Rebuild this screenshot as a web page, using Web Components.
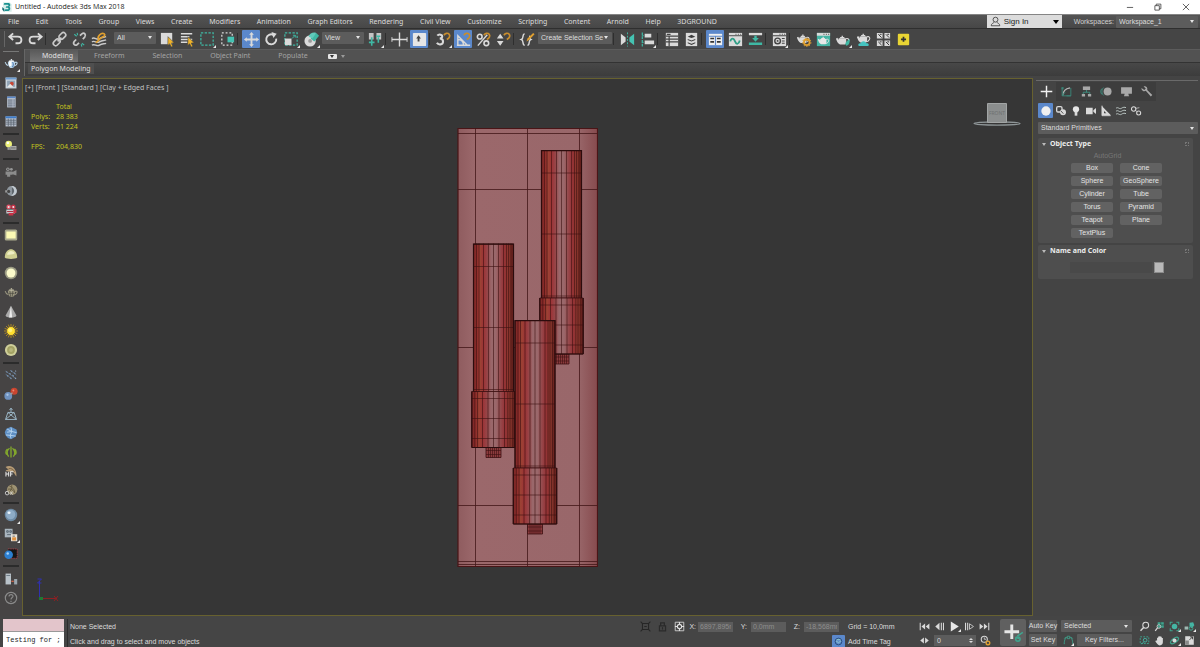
<!DOCTYPE html>
<html lang="en">
<head>
<meta charset="utf-8">
<title>Untitled - Autodesk 3ds Max 2018</title>
<style>
  html, body { margin: 0; height: 100%; background: #444; overflow: hidden; }
  body { font: 7px/10px "Noto Sans", "Open Sans", sans-serif; color: #dcdcdc; --narrow: "Liberation Sans", Arial, sans-serif; }
</style>
</head>
<body>
<mx-app></mx-app>
<script>
/* Icon drawings, all on an 18 x 18 grid. */
const W = '#dadada', T = '#3fb8a4', Y = '#e0a030';
const pot = (x, y, s, c) => `<g transform="translate(${x} ${y}) scale(${s})" fill="${c}"><path d="M3 5h8c1 3 .5 6-1 7H4.500C2 11 1 8 0 5.500l1.500-1 1.700 2.500z"/><path d="M5 3.500h4l1 1.500H4zM6.300 2h1.500v1.500H6.300z"/><path d="M11 5.500c3-1 4 1 3 3s-3 2.500-4 2.500" fill="none" stroke="${c}" stroke-width="1.200"/></g>`;
const magnet = '<path d="M9.500 4.500c1-2 4-3 5.500-1s0 4-2.500 5.500" fill="none" stroke="#c88d2e" stroke-width="1.800"/>';
const kettle = (c1, c2) => `<path d="M5 6h9c1 4-1 7-2.500 8H8C6 13 5 10 5 6z" fill="${c1}"/><path d="M5 11C3 10 2 8 1.500 6.500M14 7c2-1 3.500 0 2.500 2s-2 2-3.500 2.500" fill="none" stroke="${c1}" stroke-width="1.400"/><ellipse cx="9.500" cy="5.500" rx="3.800" ry="1.200" fill="${c2}"/><circle cx="9.500" cy="3.500" r="1" fill="${c2}"/>`;
const ICONS = {
  logo: '<path d="M3 2h10l3 3v11H3z" fill="#d7eeea"/><path d="M5 3h6c3 0 4 4 1.500 5.500C15 10 14 15 10 15H5l1.500-2.500H10c1.500 0 1.500-2.500 0-2.500H7l1-2h2c1.500 0 1.500-2.500 0-2.500H4z" fill="#1a9190"/><path d="M2 9l3 3v4l-3-3z" fill="#116a70"/>',
  undo: '<path d="M6.500 2.500L2.500 6l4 3.500M3 6h8.500c5 0 5 7 0 7H9" fill="none" stroke="#dadada" stroke-width="2"/>',
  redo: '<path d="M11.500 2.500l4 3.500-4 3.500M15 6H6.500c-5 0-5 7 0 7H9" fill="none" stroke="#dadada" stroke-width="2"/>',
  link: '<g fill="none" stroke="#c9c9c9" stroke-width="1.800"><rect x="8" y="2.700" width="8" height="5" rx="2.500" transform="rotate(-45 12 5.200)"/><rect x="2" y="9.500" width="8" height="5" rx="2.500" transform="rotate(-45 6 12)"/><path d="M7 11l4-4"/></g>',
  unlink: '<g fill="none" stroke="#c9c9c9" stroke-width="1.800"><path d="M9.500 5l2-2c2.500-2 5 1 3 3.500l-2 2M5.500 9l-2 2c-2 2.500.5 5 3 3.500l2-2"/><path d="M3.500 3.500l2.500 2M11.500 13l2.500 2M6.500 2l.5 2.500M10.800 14l.7 2.500" stroke="#3fb8a4" stroke-width="1.200"/></g>',
  bind: '<g fill="none" stroke="#c9c9c9" stroke-width="1.500"><path d="M1 8c3-2 5 2 8 0s5-1 7-2M1 11.500c3-2 5 2 8 0s5-1 7-2M1 15c3-2 5 2 8 0s5-1 7-2"/><path d="M8 9c-2-3 3-8 6-6 2 2-1 3-3 4s-4 5-6 5" stroke="#e0a030" stroke-width="1.700"/></g>',
  pick: '<path d="M2 2h12v12H2z" fill="#dadada"/><path d="M9.500 6l6.500 6.500-3 .3 1.600 3.400-1.700.8-1.600-3.500-2 1.800z" fill="#f0b42a" stroke="#444" stroke-width=".6"/>',
  pickname: '<path d="M2 3h12M2 6h9M2 9h12M2 12h7" stroke="#dadada" stroke-width="1.600"/><path d="M9.500 6l6.500 6.500-3 .3 1.600 3.400-1.700.8-1.600-3.500-2 1.800z" fill="#f0b42a" stroke="#444" stroke-width=".6"/>',
  rect: '<rect x="2" y="2" width="13" height="13" fill="none" stroke="#3fb8a4" stroke-width="1.300" stroke-dasharray="2.500 1.500"/>',
  cross: '<rect x="3" y="2" width="11" height="13" fill="none" stroke="#dadada" stroke-width="1.300" stroke-dasharray="2 2"/><rect x="9" y="6" width="7" height="6" fill="#45c3b2"/>',
  move: '<path d="M9 1l2.500 3H10v4h4V6.500L17 9l-3 2.500V10h-4v4h1.500L9 17l-2.500-3H8v-4H4v1.500L1 9l3-2.500V8h4V4H6.500z" fill="#dadada"/>',
  rotate: '<path d="M14 8a5.300 5.300 0 1 1-3-4" fill="none" stroke="#dadada" stroke-width="2"/><path d="M9 1l5.500 2L11 7.500z" fill="#dadada"/>',
  scale: '<rect x="2" y="2" width="13" height="13" fill="none" stroke="#3fb8a4" stroke-width="1.300" stroke-dasharray="2.500 1.500"/><path d="M2 8h7v7H2z" fill="#dadada"/><path d="M9.500 8L13 4.500M10.500 4.500H13V7" stroke="#3fb8a4" fill="none"/>',
  place: '<circle cx="7.500" cy="10.500" r="6" fill="#dadada"/><path d="M8 8l6-6 3 3-5 6z" fill="#3fb8a4"/><path d="M6 6c1-4 5-5 8-4l-4 6z" fill="#5fcbbb"/><circle cx="7.500" cy="10.500" r="2" fill="#9a9a9a"/>',
  pivot: '<path d="M2 2h5v7H2zM10 2h5v7h-5z" fill="#c4c4c4"/><path d="M5 6.500v9M2 12h6M12 6.500v6M9.500 5.500H14" stroke="#3fb8a4" stroke-width="1.700"/>',
  manip: '<path d="M9 1.500v15M1 9h16" stroke="#dadada" stroke-width="1.500"/><path d="M1 6.500v5M17 6.500v5" stroke="#dadada"/>',
  keyb: '<rect x="2" y="2" width="14" height="14" rx="1" fill="#e6e6e6"/><path d="M8 4.500L10.500 8H9v3H7V8H5.500z" fill="#444"/>',
  snap: '<path d="M2.500 5c1.500-2 6-1.500 5 1.500C7 8 5 8 5 8s3.500 0 3.500 3c0 4-5 4-6.500 1.500" fill="none" stroke="#dadada" stroke-width="2.200"/>' + magnet,
  angle: '<path d="M2 15h14M3 15V5l10 10M3 9c4 0 6 3 6 6" fill="none" stroke="#dadada" stroke-width="1.500"/>' + magnet,
  percent: '<circle cx="5" cy="6" r="2.500" fill="none" stroke="#dadada" stroke-width="1.700"/><circle cx="12" cy="13" r="2.500" fill="none" stroke="#dadada" stroke-width="1.700"/><path d="M3 15.500L13 4" stroke="#dadada" stroke-width="1.500"/>' + magnet,
  spin: '<path d="M5.500 3l3.500 5H2zM5.500 15.500L9 10.500H2z" fill="#dadada"/>' + magnet,
  sets: '<path d="M6 3C3 3 5.500 8 2.500 9 5.500 10 3 15 6 15M9 15c3 0 .5-5 3.500-6C10.500 8 12 6 11 5" fill="none" stroke="#dadada" stroke-width="1.500"/><path d="M8 11l1-3 6-6 1.500 1.500-6 6z" fill="#e0a030"/>',
  mirror: '<path d="M2 3l5 4v4l-5 4z" fill="#dadada"/><path d="M16 3l-5 4v4l5 4z" fill="#45c3b2"/><path d="M9 1.500v15" stroke="#3fb8a4" stroke-dasharray="2 1.500"/>',
  align: '<path d="M3.500 1.500v15" stroke="#3fb8a4" stroke-width="1.300" stroke-dasharray="3 1"/><path d="M6 3h7v4H6zM6 10h10v4H6z" fill="#dadada"/><path d="M3 5h2M3 12h2" stroke="#3fb8a4"/>',
  layers: '<path d="M3 2h13v14H3z" fill="#dadada"/><path d="M3 5.500h13M3 8.500h13M3 11.500h13M6.500 5v11M4 3.500h4" stroke="#444" stroke-width="1.300"/>',
  stack: '<path d="M3 2h12v14H3z" fill="#dadada"/><path d="M9 4l4 2-4 1.500L5 6zM5 8.500l4 1.500 4-1.500v1l-4 1.700-4-1.700zM5 12l4 1.500 4-1.500v1l-4 1.700L5 13z" fill="#3c3c3c"/>',
  explorer: '<path d="M2 3h14v12H2z" fill="#f0f0f0"/><path d="M2 5.500h14M9 5.500V15" stroke="#5c86c5" stroke-width="1.200"/><path d="M3.500 8h4M3.500 11.500h4M10.500 8h4M10.500 11.500h4" stroke="#333" stroke-width="1.700"/>',
  curve: '<path d="M2 2h14v14H2z" fill="#dadada"/><path d="M2 5h14M9 3.500h1M11.500 3.500h1M14 3.500h1" stroke="#444"/><path d="M3.500 11c1-4 3.500-4 5 0s4 3 5-1" fill="none" stroke="#2f9e86" stroke-width="1.900"/>',
  schem: '<path d="M2 2h14v2.500H2z" fill="#dadada"/><path d="M9 5v4M2 13.500h14" stroke="#3fb8a4" stroke-width="2.500"/><path d="M5.500 7.500h7L9 11.500z" fill="#3fb8a4"/>',
  mated: '<path d="M2 2h14v14H2z" fill="#dadada"/><path d="M2 5h14M11.500 8h3M11.500 10.500h3M11.500 13h3M9 3.500h1M11.500 3.500h1M14 3.500h1" stroke="#444" stroke-width="1.100"/><circle cx="7" cy="10.500" r="3" fill="none" stroke="#444" stroke-width="1.500"/><circle cx="7" cy="10.500" r="1" fill="#444"/>',
  rsetup: pot(2, 2, 0.9, W) + '<circle cx="12.500" cy="12" r="3" fill="none" stroke="#e0a030" stroke-width="1.900"/><circle cx="12.500" cy="12" r="4.400" fill="none" stroke="#e0a030" stroke-dasharray="1.500 1.500"/>',
  rframe: '<path d="M2 2h14v14H2z" fill="#45b5a4"/><path d="M2 2h14v3H2z" fill="#dadada"/><path d="M9 3.500h1M11.500 3.500h1M14 3.500h1" stroke="#333"/>' + pot(3, 4.500, 0.8, '#e8e8e8'),
  render: pot(1, 3, 0.95, W) + '<path d="M11 14c0-3 3-4 4.500-5.500.5 4-1 7-3.500 7z" fill="#3fb8a4"/>',
  cloud: pot(2, 1, 0.95, W) + '<path d="M4 16c-1.500-2 .5-3.500 2-3 1-3 5-3 6 0 3-.5 3.500 3 1 3z" fill="#45c3c0"/>',
  quads: '<path d="M2 2h6v6H2zM10 2h6v6h-6zM2 10h6v6H2zM10 10h6v6h-6z" fill="#dadada"/><path d="M3.500 3.500L7 7M11.500 3.500L15 7M3.500 11.500L7 15M11.500 11.500L15 15M5 3.500h2M13 3.500h2M5 11.500h2M13 11.500h2" stroke="#333"/>',
  plugin: '<rect x="3" y="3" width="12" height="12" rx="1" fill="#e9d534"/><path d="M9 6v5.500M6.300 8.800h5.400" stroke="#333" stroke-width="1.800"/>',

  user: '<circle cx="9" cy="6" r="4" fill="none" stroke="#333" stroke-width="1.300"/><path d="M2 16c0-4 4-4.500 5-6M16 16c0-4-4-4.500-5-6M2 16h14" fill="none" stroke="#333" stroke-width="1.300"/>',
  min: '<path d="M2 10h14" stroke="#333" stroke-width="1.700"/>',
  max: '<path d="M2 6h10v10H2zM5 6V2.500h10.500V13H12" fill="none" stroke="#333" stroke-width="1.700"/>',
  close: '<path d="M2 2l14 14M16 2L2 16" stroke="#333" stroke-width="1.700"/>',

  steapot: kettle('#bcd6ea', '#f0f6fb') + '<ellipse cx="8" cy="9" rx="1.800" ry="3" fill="#fff"/><path d="M10.500 7c2 0 2 5 0 6" fill="none" stroke="#5c86b8" stroke-width="1.500"/>',
  sframe: '<path d="M2 2h14v14H2z" fill="#c9d4dd"/><path d="M2 2h14v2.500H2z" fill="#6c9bd0"/><path d="M4 6h10v8H4z" fill="#8fa2b4"/><circle cx="10" cy="10" r="2.500" fill="#c84635"/><path d="M4 14l4-4 4 4z" fill="#e6e6e6"/>',
  ssheet: '<path d="M4 2h11v14H4z" fill="#b9c2cf"/><path d="M4 2h11v2H4z" fill="#5b87c6"/><path d="M5 6.500h9M5 9h9M5 11.500h9M5 14h9" stroke="#4f5968" stroke-width="1.100"/><path d="M11.500 5v11" stroke="#b9c2cf"/>',
  stable: '<path d="M2 3h14v13H2z" fill="#b9c2cf"/><path d="M2 3h14v2.500H2z" fill="#3f7cc9"/><path d="M2 8h14M2 10.500h14M2 13h14M5.500 6v10M9 6v10M12.500 6v10" stroke="#59626e"/>',
  sbulb: '<circle cx="6" cy="6.500" r="4.300" fill="#edf07a"/><circle cx="5" cy="5" r="1.500" fill="#fff"/><path d="M4.500 10.500h3V14h-3z" fill="#9a9a9a"/><path d="M8 9h8v5H8z" fill="#aaa"/><path d="M9 11.500h6" stroke="#555"/>',
  scam: '<circle cx="5" cy="5.500" r="2.300" fill="#969696"/><circle cx="9.500" cy="5.500" r="1.800" fill="#969696"/><path d="M2 8.500h9v4H2zM11 9l5-2.500v7L11 12zM4 12.500h4V15H4z" fill="#8c8c8c"/><circle cx="5" cy="5.500" r="1" fill="#444"/>',
  smoon: '<circle cx="10" cy="9" r="6.500" fill="#8f979f"/><path d="M10 2.500a6.500 6.500 0 0 1 0 13z" fill="#c2c9d0"/><path d="M10 4c4 2 4 8 0 10z" fill="#5f666d"/><path d="M1.500 8h4v3h-4z" fill="#9a9a9a"/><circle cx="6" cy="9.500" r="2" fill="#444"/>',
  sredcam: '<circle cx="6" cy="5" r="3" fill="#e05366"/><circle cx="12" cy="5" r="3" fill="#c73247"/><circle cx="6" cy="5" r="1.300" fill="#e8eef0"/><circle cx="12" cy="5" r="1.300" fill="#e8eef0"/><path d="M3 8.500h11v5H3z" fill="#c9ced2"/><path d="M12 9l4-1.500v5L12 14zM6 13h6v3H6z" fill="#c73247"/><path d="M4 11h8" stroke="#a42738" stroke-width="1.300"/>',
  srect: '<rect x="1" y="2" width="16" height="14" rx="2" fill="#a9a98c"/><rect x="3" y="4.500" width="12" height="9" fill="#fcfab4"/>',
  sdome: '<path d="M1 13.500C1 7 5 3 9 3s8 4 8 10.500c-2 2.500-14 2.500-16 0z" fill="#cfcf92"/><path d="M4 10c0-3 3-5 5-5s4 1 5 3c-3 2-7 2-10 2z" fill="#eeeec4"/>',
  sdisc: '<circle cx="9" cy="9" r="8" fill="#9c9c84"/><circle cx="9" cy="9" r="5.700" fill="#fbfacb"/>',
  swire: kettle('#99957f', '#b8b49c') + '<path d="M7.500 6l1 8M11.500 6l-1 8M5.500 9.500h8" stroke="#4c4a40" stroke-width=".9"/>',
  scone: '<path d="M9 1l7 12.500c0 3.500-14 3.500-14 0z" fill="#a9a9a9"/><path d="M9 1l1.500 15h-4z" fill="#ececec"/>',
  ssun: '<path d="M9 0v18M0 9h18M2.600 2.600l12.800 12.800M15.400 2.600L2.600 15.400M5.600 .8l6.800 16.400M12.400 .8L5.600 17.200M.8 5.600l16.400 6.800M.8 12.400l16.400-6.800" stroke="#c99a1c" stroke-width="1"/><circle cx="9" cy="9" r="5" fill="#ffdf30"/><circle cx="8" cy="8" r="2.500" fill="#fff07a"/>',
  sring: '<circle cx="9" cy="9" r="7.800" fill="#cfcf9a"/><circle cx="9" cy="9" r="5" fill="#a3a264"/><circle cx="9" cy="9" r="2.500" fill="#b7b67c"/>',
  sdots: '<g fill="#93b0cf"><path d="M2 4l3 1-1 1.500zM6 6l3 1.500L8 9zM10 8.500l3 1.500-1 1.500zM13 12l3 1-1 1.500zM8 3l3 1-1 1.500zM12 5.500l3 1-1 1.500zM3 8.500L6 10l-1 1.500zM7 12l3 1-1 1.500zM14 3l2 .7-1 1.300z"/></g><path d="M2 4l12 9M8 3l8 6M2 8l8 6" stroke="#617c9d" stroke-width=".8"/>',
  smol: '<circle cx="5.500" cy="11.500" r="5" fill="#6f92c0"/><circle cx="13" cy="5.500" r="4.500" fill="#c9452f"/><circle cx="4.500" cy="10" r="1.500" fill="#a8c4e4"/><circle cx="12" cy="4.500" r="1.200" fill="#ea8a74"/><path d="M8 9.500l3-2" stroke="#999" stroke-width="1.600"/>',
  scage: '<path d="M2 16l3-9h8l3 9zM2 16l11-9M16 16L5 7M9 1.500V7M7 4l2-2.500L11 4" fill="none" stroke="#9db9c9" stroke-width="1.200"/>',
  scrys: '<path d="M9 1l3 1.500 4 2 1 4-2 5-3 2-3 1.500-4-1.500-3-3.500L1 8l2-4.500z" fill="#5e8fc4"/><path d="M9 2l1 5-6-3M10 7l6 1.500M10 7l-2 5-5.500-.5M8 12l1 4M8 12l7 1M4 8l6-1" stroke="#bcd8f2" stroke-width="1.100" fill="none"/>',
  sgrass: '<path d="M9 16V2M6 15C3 11 4 7 7 4M12 15c3-3.500 2-7.500-1-11M3.500 12.500c-2-3-1-5.500 1-7.500M14.500 12.500c2-3 1-5.500-1-7.500" fill="none" stroke="#83a82c" stroke-width="1.700"/>',
  sbird: '<path d="M2 4c4-3 10-1 12 3 2 3 2 6 2 9-2-2-3-5-5-6-4 0-7 0-9-2l4-1c-2-1-3-2-4-3z" fill="#b59a74"/><path d="M6 6c3-1 6 1 8 4" stroke="#6e583c" fill="none"/><path d="M2.500 10v6M6 10v6M2.500 13H6M8.500 16v-6H12M8.500 13H11" stroke="#e8e8e8" stroke-width="1.300" fill="none"/>',
  sorn: '<circle cx="10.500" cy="8.500" r="6.700" fill="#9e9272"/><path d="M7 4c4 1 6 4 7 8M5 8c4-1 7 1 9 5M10 2.500c0 4-1 8-4 10" stroke="#62583e" fill="none" stroke-width="1.100"/><circle cx="4" cy="13" r="2.300" fill="none" stroke="#d8d8d8" stroke-width="1.100"/><path d="M8 11l3 4M11 11l-3 4" stroke="#d8d8d8"/>',
  sball: '<circle cx="9" cy="9" r="8" fill="#6e8ba5"/><circle cx="8.500" cy="8.500" r="6" fill="#8dabc6"/><ellipse cx="6.500" cy="6" rx="2" ry="1.600" fill="#eaf4fc"/>',
  sdocs: '<path d="M1 1h10v11H1z" fill="#a9b5be"/><path d="M3.500 3.500h2v2h-2zM7.500 3.500h2v2h-2zM4 8.500h5" stroke="#4b5863" fill="none"/><path d="M9 8h8v9H9z" fill="#e4ded4"/><path d="M10.500 12h5v4h-5z" fill="#e0913e"/><path d="M11 10.500h3" stroke="#555"/>',
  sblue: '<path d="M5 2.500h12v12H7" fill="#161616" stroke="#b24049" stroke-dasharray="2 1"/><circle cx="6" cy="10" r="5.500" fill="#2c7fd0"/><circle cx="4.800" cy="8.300" r="1.600" fill="#a5d2f8"/>',
  sbars: '<path d="M2 2h7v14H2z" fill="#b9c2c9"/><path d="M3 4.500h5" stroke="#5d6b77"/><path d="M13 9h4v7h-4z" fill="#9ba6ae"/><path d="M9.500 12h3" stroke="#c9634a" stroke-width="1.700"/>',
  shelp: '<circle cx="9" cy="9" r="7.300" fill="none" stroke="#8b8b8b" stroke-width="1.500"/><path d="M6.500 7c0-3.500 5.500-3 5 0-.3 1.500-2.500 1.500-2.500 4M9 12.500V14" fill="none" stroke="#8b8b8b" stroke-width="1.500"/>',

  plus: '<path d="M9 1v16M1 9h16" stroke="#f2f2f2" stroke-width="2"/>',
  modify: '<path d="M4 14.500C4 9 8 5 14 4" fill="none" stroke="#b5b5b5" stroke-width="1.700"/><path d="M3 4v11h12M3 15L7 10M9 15h6V4" fill="none" stroke="#3b8577" stroke-width="1.300"/><path d="M2 3h3v3H2z" fill="#3b8577"/>',
  hier: '<path d="M4 2h10v5H4z" fill="#a8a8a8"/><path d="M9 7v3M4.500 13v-3h9v3" fill="none" stroke="#3f8f80" stroke-width="1.300"/><path d="M2.500 12.500h4.500V16H2.500zM11 12.500h4.500V16H11z" fill="#a8a8a8"/>',
  motion: '<circle cx="10.500" cy="9" r="5.500" fill="#a8a8a8"/><path d="M5 3.500c-3 3-3 8 0 11M2.500 5c-2 3-2 5 0 8" fill="none" stroke="#3f8f80" stroke-width="1.200"/>',
  display: '<path d="M1.500 3h15v9h-15zM6.500 12h5l1 3.500h-7z" fill="#a8a8a8"/>',
  wrench: '<path d="M2 4a4 4 0 0 0 6 4l7 8 2-2-7-7c1-4-2-6-5-5l3 3-2 2z" fill="#a8a8a8"/>',
  geo: '<circle cx="9" cy="9" r="7" fill="#f0f0f0"/>',
  shapes: '<rect x="2.500" y="2.500" width="8" height="8" rx="2" fill="none" stroke="#dadada" stroke-width="2"/><circle cx="12" cy="11" r="4.500" fill="#dadada"/><path d="M9 9l3.500 4" stroke="#444" stroke-width="1.300"/>',
  lights: '<circle cx="9" cy="6.500" r="4.700" fill="#e6e6e6"/><path d="M7 10h4v6H7z" fill="#dadada"/>',
  camera: '<path d="M1.500 4h10v10h-10zM12.500 8l4-3.500v9L12.500 10z" fill="#dadada"/>',
  helpers: '<path d="M3 2l13 13H3z" fill="#dadada"/><path d="M6 9l3.500 3.500H6z" fill="#444"/><path d="M3 1v15h13" stroke="#dadada" stroke-width="1.500" fill="none"/>',
  warps: '<path d="M1.500 5c3-3 5 2 8 0s5-2 7-1M1.500 9.500c3-3 5 2 8 0s5-2 7-1M1.500 14c3-3 5 2 8 0s5-2 7-1" fill="none" stroke="#b9c4c2" stroke-width="1.500"/>',
  systems: '<circle cx="5.500" cy="6" r="3.300" fill="none" stroke="#dadada" stroke-width="1.600"/><circle cx="13" cy="12" r="3" fill="none" stroke="#dadada" stroke-width="1.600"/><path d="M8 8l2.500 2M9 5l5-1" stroke="#dadada"/>',

  iso: '<path d="M4 4h10v10H4z" fill="none" stroke="#262626" stroke-width="1.700"/><path d="M1 1l4 4M17 1l-4 4M1 17l4-4M17 17l-4-4M7 9h4" stroke="#262626" stroke-width="1.700"/>',
  lock: '<path d="M4 8h10v8H4zM6 8V3h6v5" fill="none" stroke="#2a2a2a" stroke-width="2"/><path d="M9 10v4" stroke="#2a2a2a" stroke-width="2"/>',
  absrel: '<path d="M2 2h14v14H2z" fill="none" stroke="#cfcfcf" stroke-width="1.500"/><circle cx="9" cy="9" r="3.500" fill="none" stroke="#e0e0e0" stroke-width="1.800"/><path d="M9 1.500v4M9 12.500v4M1.500 9h4M12.500 9h4" stroke="#e0e0e0" stroke-width="1.800"/>',
  tag: '<circle cx="9" cy="9" r="5.500" fill="none" stroke="#274a77" stroke-width="1.500"/><path d="M5 8l4 3 4-3M6 6h6" fill="none" stroke="#9fd8c8" stroke-width="1.300"/>',
  first: '<path d="M2 3v12" stroke="#dadada" stroke-width="1.700"/><path d="M10 4v10L4 9zM17 4v10l-6-5z" fill="#dadada"/>',
  prev: '<path d="M9 3v12L2 9z" fill="#dadada"/><path d="M12 3v12M15.500 3v12" stroke="#dadada" stroke-width="1.700"/>',
  play: '<path d="M3 1l13 8-13 8z" fill="#e6e6e6"/>',
  next: '<path d="M9 4.500v9L15.500 9z" fill="none" stroke="#dadada" stroke-width="1.300"/><path d="M2.500 3v12M6 3v12" stroke="#dadada" stroke-width="1.700"/>',
  last: '<path d="M16 3v12" stroke="#dadada" stroke-width="1.700"/><path d="M8 4v10l6-5zM1 4v10l6-5z" fill="#dadada"/>',
  keymode: '<path d="M8 4v10L2 9zM10 4v10l6-5z" fill="#dadada"/>',
  timecfg: '<circle cx="7" cy="7" r="5" fill="none" stroke="#dadada" stroke-width="1.700"/><path d="M7 4v3h3" stroke="#dadada" stroke-width="1.300" fill="none"/><circle cx="13" cy="13" r="3" fill="none" stroke="#e0a030" stroke-width="2.200"/>',
  bigkey: '<path d="M8 2v12M2 8h12" stroke="#e6e6e6" stroke-width="2.400"/><path d="M12.500 11.500L17 8.500M14 13.500l-3-1" stroke="#3fa58f" stroke-width="1.300"/><circle cx="13" cy="14" r="1.800" fill="none" stroke="#3fa58f" stroke-width="1.200"/>',
  tangent: '<path d="M2 15c0-7 2-11 5-11M16 15c0-7-2-11-5-11" fill="none" stroke="#3fa58f" stroke-width="1.500"/><path d="M7 2h4v4H7zM2 6l3-3M16 6l-3-3" fill="none" stroke="#3fa58f" stroke-width="1.300"/>',
  zoom: '<circle cx="11" cy="7" r="4.800" fill="none" stroke="#dadada" stroke-width="1.700"/><path d="M7.500 10.500L2.500 16" stroke="#dadada" stroke-width="2.300"/>',
  zoomall: '<path d="M6 2h10v9H6z" fill="#3fa58f"/><path d="M11 2v9M6 6.500h10" stroke="#263b37"/><circle cx="8" cy="9" r="3" fill="none" stroke="#dadada" stroke-width="1.300"/><path d="M6 11l-4 5" stroke="#dadada" stroke-width="1.900"/>',
  zext: '<circle cx="9" cy="9" r="4.500" fill="#45b5a4"/><path d="M2 6V2h4M12 2h4v4M16 12v4h-4M6 16H2v-4" fill="none" stroke="#3fa58f" stroke-width="1.700"/>',
  zextall: '<path d="M9 3l6-1 2 5-4 5-4-3z" fill="#45b5a4"/><path d="M1 9h6v5H1z" fill="#9fb8b2"/><circle cx="11.500" cy="12" r="3" fill="none" stroke="#3fa58f" stroke-width="1.500"/>',
  region: '<rect x="2" y="3" width="14" height="11" fill="none" stroke="#3fa58f" stroke-width="1.500" stroke-dasharray="3 2"/><circle cx="10" cy="8.500" r="3" fill="none" stroke="#45b5a4" stroke-width="1.500"/><path d="M8 11l-4 4" stroke="#45b5a4" stroke-width="1.500"/>',
  hand: '<path d="M5 9V4.500h1.800V2.500h2V2h2v1h1.900v2h1.800v7c0 3-2 5-5 5-3 0-5-3-7.500-7l1.500-1z" fill="#dadada"/>',
  orbit: '<ellipse cx="9" cy="9" rx="7.500" ry="3.500" transform="rotate(-35 9 9)" fill="none" stroke="#3fa58f" stroke-width="2"/><circle cx="9" cy="9" r="3.300" fill="#dadada"/>',
  maxvp: '<path d="M2 2h14v14H2z" fill="#dadada"/><path d="M2 9h6v7H2z" fill="#8a8a8a"/><path d="M9 8l5-5M10 3h4v4" fill="none" stroke="#333" stroke-width="1.500"/>'
};

/* Registers an element whose open shadow root is cloned from a template.
   setup runs when it is connected, and again when its name attribute changes. */
function define(name, html, setup) {
  const template = document.createElement('template');
  template.innerHTML = '<style>:host{display:block;box-sizing:border-box;min-width:0}*{box-sizing:border-box}button,select,input{font:inherit;color:inherit;margin:0;padding:0;border:0;background:none;border-radius:0;outline:0;min-width:0}button{display:flex;align-items:center;justify-content:center;white-space:nowrap}</style>' + html;
  customElements.define(name, class extends HTMLElement {
    static observedAttributes = ['name'];
    constructor() {
      super();
      this.attachShadow({ mode: 'open' }).append(template.content.cloneNode(true));
    }
    connectedCallback() { if (setup) setup(this, this.shadowRoot); }
    attributeChangedCallback() { if (setup && this.isConnected) setup(this, this.shadowRoot); }
  });
}

define('mx-icon', '<style>:host{width:18px;height:18px;flex:none}svg{display:block;width:100%;height:100%}</style><svg viewBox="0 0 18 18" aria-hidden="true"></svg>',
  (el, root) => { root.querySelector('svg').innerHTML = ICONS[el.getAttribute('name')] || ''; });

define('mx-tool', `<style>
  :host{display:grid;width:var(--tool-w,20px);height:var(--tool-h,19px);flex:none;place-items:center}
  button{width:var(--face,18px);height:var(--face,18px);grid-area:1/1}
  :host([active]) button{background:#5b88cb;border-radius:1px}
  mx-icon{width:var(--glyph,17px);height:var(--glyph,17px)}
  i{display:none;grid-area:1/1;place-self:end;width:0;height:0;border:solid transparent;border-width:3px 0 0 3px;border-right:0;border-bottom:3px solid #e8e8e8;border-top:0;margin:0 1px 1px 0}
  :host([flyout]) i{display:block}
</style><button type="button"><mx-icon></mx-icon></button><i></i>`, (el, root) => {
  root.querySelector('mx-icon').setAttribute('name', el.getAttribute('icon'));
  root.querySelector('button').setAttribute('aria-label', el.getAttribute('icon'));
});

define('mx-select', `<style>
  :host{display:grid;height:12px;flex:none;background:#5c5c5c;font-family:var(--narrow);border-radius:1px;align-items:center}
  select{grid-area:1/1;appearance:none;width:100%;height:12px;line-height:12px;padding:0 8px 0 3px;overflow:hidden}
  i{grid-area:1/1;justify-self:end;margin-right:4px;border:solid transparent;border-width:3px 2px 0;border-top-color:#e6e6e6;pointer-events:none}
  option{color:#000}
</style><select><option></option></select><i></i>`, (el, root) => {
  root.querySelector('option').textContent = el.getAttribute('value');
  root.querySelector('select').setAttribute('aria-label', el.getAttribute('label'));
});

define('mx-title-bar', `<style>
  :host{display:flex;align-items:center;height:14px;flex:none;background:#fff;color:#222;padding:0 10px 0 1px;gap:2px;font-family:"Open Sans",sans-serif}
  .logo{width:12px;height:12px} h1{font:inherit;margin:0;flex:1}
  div{display:flex;gap:20px} div mx-icon{width:8px;height:8px} div button{width:8px;height:12px}
</style><mx-icon class="logo" name="logo"></mx-icon><h1>Untitled - Autodesk 3ds Max 2018</h1>
<div><button aria-label="Minimize"><mx-icon name="min"></mx-icon></button><button aria-label="Restore"><mx-icon name="max"></mx-icon></button><button aria-label="Close"><mx-icon name="close"></mx-icon></button></div>`);

define('mx-menu-bar', `<style>
  :host{display:flex;align-items:center;height:15px;flex:none;background:linear-gradient(#858585 0 1px,#545454 1px,#474747 14px,#2f2f2f 14px);padding-right:2px}
  nav{display:flex;flex:0 1 725px;justify-content:space-between;margin-right:auto} nav button{padding:0 8px;height:14px}
  .sign{width:75px;height:13px;background:#dcdcdc;color:#222;font:8px/13px var(--narrow);justify-content:flex-start;padding:0 3px;gap:3px}
  .sign mx-icon{width:11px;height:11px} .sign span{flex:1;text-align:left}
  .sign i{border:solid transparent;border-width:4px 3px 0;border-top-color:#000}
  .label{font-family:var(--narrow);padding:0 2px 0 12px;color:#d0d0d0}
  mx-select{width:82px}
</style><nav></nav><button class="sign"><mx-icon name="user"></mx-icon><span>Sign In</span><i></i></button>
<span class="label">Workspaces:</span><mx-select value="Workspace_1" label="Workspaces"></mx-select>`, (el, root) => {
  root.querySelector('nav').innerHTML = ['File','Edit','Tools','Group','Views','Create','Modifiers','Animation','Graph Editors','Rendering','Civil View','Customize','Scripting','Content','Arnold','Help','3DGROUND'].map(t => `<button type="button">${t}</button>`).join('');
});

define('mx-toolbar', `<style>
  :host{display:flex;align-items:center;height:20px;flex:none;background:#454545}
  b{width:4px;height:12px;flex:none;border-left:1px solid #2e2e2e} b.gap{border:0} b.grip{width:5px;height:16px;border-left:0;border-right:1px solid #666;margin-right:0}
  mx-select{margin:0 1px 3px;width:42px;height:12px} mx-select.wide{width:74px}
</style><b class="grip"></b>
<mx-tool icon="undo"></mx-tool><mx-tool icon="redo"></mx-tool><b></b>
<mx-tool icon="link"></mx-tool><mx-tool icon="unlink"></mx-tool><mx-tool icon="bind"></mx-tool><b class="gap"></b>
<mx-select value="All" label="Selection filter"></mx-select>
<mx-tool icon="pick"></mx-tool><mx-tool icon="pickname"></mx-tool><mx-tool icon="rect" flyout></mx-tool><mx-tool icon="cross"></mx-tool><b></b>
<mx-tool icon="move" active></mx-tool><mx-tool icon="rotate"></mx-tool><mx-tool icon="scale" flyout></mx-tool><mx-tool icon="place" flyout></mx-tool>
<mx-select value="View" label="Reference coordinate system"></mx-select>
<mx-tool icon="pivot" flyout></mx-tool><b></b>
<mx-tool icon="manip"></mx-tool><mx-tool icon="keyb" active></mx-tool><b></b>
<mx-tool icon="snap" flyout></mx-tool><mx-tool icon="angle" active></mx-tool><mx-tool icon="percent"></mx-tool><mx-tool icon="spin"></mx-tool><b></b>
<mx-tool icon="sets"></mx-tool><mx-select class="wide" value="Create Selection Se" label="Named selection sets"></mx-select><b></b>
<mx-tool icon="mirror"></mx-tool><mx-tool icon="align" flyout></mx-tool><b></b>
<mx-tool icon="layers"></mx-tool><mx-tool icon="stack"></mx-tool><b></b>
<mx-tool icon="explorer" active></mx-tool><mx-tool icon="curve"></mx-tool><mx-tool icon="schem"></mx-tool><b></b>
<mx-tool icon="mated" flyout></mx-tool><b></b>
<mx-tool icon="rsetup"></mx-tool><mx-tool icon="rframe"></mx-tool><mx-tool icon="render" flyout></mx-tool><mx-tool icon="cloud"></mx-tool><mx-tool icon="quads"></mx-tool><mx-tool icon="plugin"></mx-tool>`);

define('mx-ribbon', `<style>
  :host{border-left:1px solid #666;margin-left:2px}
  .tabs{display:flex;height:13px;background:#525252;border-top:1px solid #5c5c5c;padding-left:5px}
  .tabs button{padding:0 14px;color:#a4a4a4}
  .tabs .on{padding:0 5px 0 12px;margin-right:2px;color:#e2e2e2;background:linear-gradient(#5a5a5a,#757575)}
  .tabs .more{gap:4px;padding:0 6px}
  .more b{width:9px;height:5px;background:#e6e6e6;border-radius:1px;display:grid;place-items:center}
  i{border:solid transparent;border-width:3px 2px 0;border-top-color:#999} b i{border-top-color:#333}
  .body{height:14px;background:linear-gradient(#484848,#3c3c3c);border-top:1px solid #333;padding-left:3px}
  .body button{height:11px;padding:0 3px;background:#4f4f4f;color:#dedede}
</style><div class="tabs"><button class="on">Modeling</button><button>Freeform</button><button>Selection</button><button>Object Paint</button><button>Populate</button><button class="more" aria-label="Ribbon options"><b><i></i></b><i></i></button></div>
<div class="body"><button>Polygon Modeling</button></div>`);

define('mx-side-bar', `<style>
  :host{display:flex;flex-direction:column;justify-content:space-between;align-items:center;width:22px;flex:none;padding:2px 0 8px;background:#464444;--tool-w:20px;--tool-h:19px;--glyph:14px}
  hr{width:16px;height:2px;margin:2px 0;border:0;background:#2b2b2b;flex:none} .grip{height:1px;margin:0 0 2px;background:#777}
</style>`, (el, root) => {
  const groups = ['steapot* sframe ssheet stable', 'sbulb', 'scam smoon sredcam', 'srect sdome sdisc swire scone ssun sring', 'sdots smol scage scrys sgrass sbird sorn', 'sball* sdocs* sblue', 'sbars shelp'];
  root.append(document.createRange().createContextualFragment('<hr class="grip">' + groups.map(g => g.split(' ').map(n => `<mx-tool icon="${n.replace('*', '')}"${n.endsWith('*') ? ' flyout' : ''}></mx-tool>`).join('')).join('<hr>')));
});

/* The modelled scene: a plate with three flashlights in front of it. */
define('mx-scene', '<style>:host{width:141px}svg{display:block;width:141px;height:440px}</style><svg viewBox="457 127 141 440" role="img" aria-label="Front view of the model"></svg>', (el, root) => {
  const v = (xs, y1, y2) => xs.map(x => `M${x} ${y1}V${y2}`).join('');
  const h = (ys, w) => ys.map(y => `M${-w} ${y}H${w}`).join('');
  const xs = [-17, -14.500, -10, -5, 0, 5, 10, 13, 15, 17.500];
  const torch = (x, y) => `<g transform="translate(${x} ${y})"><g stroke="#3c1011" stroke-width=".8">
    <path d="M-7.500 204h15v10h-15z" fill="#8b3a3c"/><path d="M-20 .5h40V148h-40z" fill="url(#tube)"/><path d="M-21.700 148h43.400v56h-43.400z" fill="url(#tube)"/>
    <path fill="none" stroke-width=".6" d="${v(xs, 0, 148)}${v(xs.map(x => x * 1.100), 148, 204)}${v([-5, -3, -1, 1, 3, 5], 204, 214)}${h([23, 84, 146], 20)}${h([155, 175, 195], 21.700)}${h([207, 211], 7.500)}"/></g>
    <path d="M-20 .7h40M-21.700 204h43.400M-20 0v148M20 0v148M-21.700 148v56M21.700 148v56" stroke="#2c0c0d" stroke-width="1.200"/></g>`;
  root.querySelector('svg').innerHTML = `<defs>
    <linearGradient id="tube"><stop offset="0" stop-color="#7a2826"/><stop offset=".08" stop-color="#8c2a29"/><stop offset=".17" stop-color="#9c4234"/><stop offset=".25" stop-color="#9c3235"/><stop offset=".36" stop-color="#96484b"/><stop offset=".44" stop-color="#9a676a"/><stop offset=".56" stop-color="#9a686b"/><stop offset=".66" stop-color="#964a4d"/><stop offset=".76" stop-color="#963236"/><stop offset=".88" stop-color="#8a372d"/><stop offset="1" stop-color="#621d1b"/></linearGradient>
    <linearGradient id="plate"><stop offset="0" stop-color="#8f5c5f"/><stop offset=".12" stop-color="#9b686b"/><stop offset=".86" stop-color="#99676a"/><stop offset="1" stop-color="#874b4e"/></linearGradient></defs>
    <path d="M458 128.500h139.500v438H458z" fill="url(#plate)" stroke="#4a1517" stroke-width="1.200"/>
    <path d="M458 133.500h139M458 189.500h139M458 347.500h139M458 505.500h139M458 561.500h139M458 564.500h139M475.500 128v438M527.500 128v438M579.500 128v438" stroke="#421618" stroke-width=".8" fill="none"/>
    ${torch(561.500, 150)}${torch(493.500, 243.500)}${torch(535, 320)}`;
});

define('mx-viewport', `<style>
  :host{display:grid;flex:1;background:#363636;border:solid #67612f;border-width:1px;grid-template:minmax(0,1fr)/minmax(0,1fr);overflow:hidden}
  :host>*{grid-area:1/1}
  mx-scene{place-self:center}
  .info{place-self:start;padding:4px 2px} p{display:flex;gap:2px;margin:0;color:#c2c2c2}
  table{border-collapse:collapse;margin:9px 0 0 6px;color:#c4c41e} td,th{padding:0;height:10px;line-height:10px;font-weight:400;text-align:left} th{width:25px}
  .cube{place-self:start end;width:48px;height:28px;margin:22px 11px} .axis{place-self:end start;width:28px;height:24px;margin:0 0 13px 12px}
</style><mx-scene></mx-scene>
<div class="info"><p><span>[+]</span><span>[Front ]</span><span>[Standard ]</span><span>[Clay + Edged Faces ]</span></p>
<table><tr><th></th><td>Total</td></tr><tr><th>Polys:</th><td>28 383</td></tr><tr><th>Verts:</th><td>21 224</td></tr><tr><th></th><td></td></tr><tr><th>FPS:</th><td>204,830</td></tr></table></div>
<svg class="cube" viewBox="0 0 48 28"><ellipse cx="24" cy="22.500" rx="23" ry="1.700" fill="none" stroke="#8f9698" stroke-width="1.200"/><path d="M14.500 2.500h19v19h-19z" fill="#8b8e8e" stroke="#a2a5a5"/><text x="24" y="14" font-size="5" text-anchor="middle" fill="#6d7070">FRONT</text></svg>
<svg class="axis" viewBox="0 0 28 24"><path d="M4.500 20V3M2.500 1h4l-4 4h4" stroke="#3030b0" fill="none"/><path d="M5 20.500h17M19 18l4 5M23 18l-4 5" stroke="#8d2023" fill="none"/><path d="M4 19h4v3H4z" fill="#1f7a34"/></svg>`);

define('mx-rollout', `<style>
  :host{background:#4e4e4e;border-radius:2px;padding:1px 4px 4px}
  h2{display:flex;align-items:center;gap:4px;font:bold 7px/10px "Noto Sans",sans-serif;margin:0;color:#ececec} h2 span{flex:1}
  i{border:solid transparent;border-width:3px 2px 0;border-top-color:#bbb} b{width:4px;height:4px;border:1px dotted #777}
</style><h2><i></i><span></span><b></b></h2><slot></slot>`, (el, root) => { root.querySelector('span').textContent = el.getAttribute('heading'); });

define('mx-command-panel', `<style>
  :host{width:167px;flex:none;padding:4px 2px 0 5px;font-family:var(--narrow)}
  .tabs{display:flex;border-top:1px solid #6a6a6a;padding-top:1px;margin-left:-2px;--glyph:13px;--face:16px}
  .tabs div{display:flex;background:#3d3d3d}
  .cats{display:flex;padding:0 0 1px;--tool-w:15px;--face:15px;--glyph:12px}
  mx-select{margin:1px 0 4px} mx-rollout{margin:0 5px 2px 0}
  .auto{text-align:center;color:#777;line-height:14px;padding-right:16px}
  .grid{display:grid;grid-template-columns:42px 42px;gap:3px 7px;justify-content:center}
  .grid button{height:10px;background:#626262;border-radius:2px;color:#e4e4e4}
  .name{display:flex;gap:2px;justify-content:center;padding:6px 0 2px 3px} .name input{width:82px;height:11px;background:#494949} .name button{width:10px;height:11px;background:#b9b9b9;border:1px solid #8c8c8c}
  .grid{padding:0 0 1px 2px}
</style>
<div class="tabs"><mx-tool icon="plus"></mx-tool><div><mx-tool icon="modify"></mx-tool><mx-tool icon="hier"></mx-tool><mx-tool icon="motion"></mx-tool><mx-tool icon="display"></mx-tool><mx-tool icon="wrench"></mx-tool></div></div>
<div class="cats"><mx-tool icon="geo" active></mx-tool><mx-tool icon="shapes"></mx-tool><mx-tool icon="lights"></mx-tool><mx-tool icon="camera"></mx-tool><mx-tool icon="helpers"></mx-tool><mx-tool icon="warps"></mx-tool><mx-tool icon="systems"></mx-tool></div>
<mx-select value="Standard Primitives" label="Primitive category"></mx-select>
<mx-rollout heading="Object Type"><div class="auto">AutoGrid</div><div class="grid"><button>Box</button><button>Cone</button><button>Sphere</button><button>GeoSphere</button><button>Cylinder</button><button>Tube</button><button>Torus</button><button>Pyramid</button><button>Teapot</button><button>Plane</button><button>TextPlus</button></div></mx-rollout>
<mx-rollout heading="Name and Color"><div class="name"><input aria-label="Object name"><button aria-label="Object color"></button></div></mx-rollout>`);

define('mx-status-bar', `<style>
  :host{display:flex;height:31px;flex:none;padding:3px 3px 0;font-family:var(--narrow);background:#454545;--tool-w:15px;--tool-h:14px;--face:13px;--glyph:11px}
  .listener{width:61px;flex:none} .listener div{height:13px;background:#e3c5cb;border-bottom:1px solid #999} .listener input{display:block;width:61px;height:15px;background:#fff;color:#222;font:7px/14px "Liberation Mono",monospace;padding:0 3px}
  .msg{flex:1;border-left:1px solid #2d2d2d;margin-left:3px;padding-left:2px} p{margin:0;line-height:15px;white-space:nowrap}
  .coords{width:280px;flex:none} .row{display:flex;align-items:center;height:14px}
  .coords .row{height:15px}
  .coords label{width:18px;padding-right:4px;text-align:right} .coords .first{width:10px;padding-right:2px} .coords .row>input{width:35px;height:10px;background:#5c5c5c;color:#8d8d8d;padding:0 2px}
  .coords mx-tool{--tool-w:17px} .grid{padding-left:9px} .tagrow{padding-left:194px} .tagrow mx-tool{--tool-w:15px} .tagrow span{padding-left:2px}
  .play{width:83px;flex:none} .play .row{height:14px} .spin{display:flex;align-items:center;width:42px;height:11px;background:#5c5c5c;margin:0 2px;padding:0 3px}
  .spin input{flex:1;width:20px;height:11px} .spin i{border:solid transparent;border-width:0 2px 2px;border-bottom-color:#ddd;display:block;margin:1px 0} .spin i+i{border-width:2px 2px 0;border-top-color:#ddd}
  .big{width:26px;height:27px;background:#606060;border-radius:2px;flex:none;margin-right:3px} .big mx-icon{width:22px;height:22px}
  .keys{display:grid;grid-template-columns:28px 71px;gap:2px 4px;align-content:start;flex:none;margin-right:5px;padding-top:1px} .keys>button,.kf button{height:12px;background:#5c5c5c;border-radius:1px}
  .kf{display:flex;gap:2px} .kf button{flex:1} .kf mx-tool{--tool-w:14px;--tool-h:12px}
  .nav{display:grid;grid-template-columns:repeat(4,15px);align-content:start;flex:none}
</style>
<div class="listener"><div></div><input value="Testing for ;" aria-label="Script listener"></div>
<div class="msg"><p>None Selected</p><p>Click and drag to select and move objects</p></div>
<div class="coords"><div class="row"><mx-tool icon="iso"></mx-tool><mx-tool icon="lock"></mx-tool><mx-tool icon="absrel"></mx-tool><label class="first" for="x">X:</label><input id="x" value="6897,895m"><label for="y">Y:</label><input id="y" value="0,0mm"><label for="z">Z:</label><input id="z" value="-18,568mm"><span class="grid">Grid = 10,0mm</span></div>
<div class="row tagrow"><mx-tool icon="tag" active></mx-tool><span>Add Time Tag</span></div></div>
<div class="play"><div class="row"><mx-tool icon="first"></mx-tool><mx-tool icon="prev"></mx-tool><mx-tool icon="play" flyout></mx-tool><mx-tool icon="next"></mx-tool><mx-tool icon="last"></mx-tool></div>
<div class="row"><mx-tool icon="keymode"></mx-tool><span class="spin"><input value="0" aria-label="Current frame"><span><i></i><i></i></span></span><mx-tool icon="timecfg"></mx-tool></div></div>
<button class="big" aria-label="Set keys"><mx-icon name="bigkey"></mx-icon></button>
<div class="keys"><button>Auto Key</button><mx-select value="Selected" label="Key target"></mx-select><button>Set Key</button><div class="kf"><mx-tool icon="tangent" flyout></mx-tool><button>Key Filters...</button></div></div>
<div class="nav"><mx-tool icon="zoom"></mx-tool><mx-tool icon="zoomall"></mx-tool><mx-tool icon="zext" flyout></mx-tool><mx-tool icon="zextall" flyout></mx-tool><mx-tool icon="region"></mx-tool><mx-tool icon="hand"></mx-tool><mx-tool icon="orbit" flyout></mx-tool><mx-tool icon="maxvp"></mx-tool></div>`);

define('mx-app', `<style>
  :host{display:flex;flex-direction:column;height:100vh;overflow:hidden}
  .main{display:flex;flex:1;min-height:0} .work{display:flex;flex-direction:column;flex:1;min-width:0} .stage{display:flex;flex:1;min-height:0}
  mx-viewport{margin:2px 0 0}
</style><mx-title-bar></mx-title-bar><mx-menu-bar></mx-menu-bar><mx-toolbar></mx-toolbar>
<div class="main"><mx-side-bar></mx-side-bar><div class="work"><mx-ribbon></mx-ribbon><div class="stage"><mx-viewport></mx-viewport><mx-command-panel></mx-command-panel></div></div></div>
<mx-status-bar></mx-status-bar>`);
</script>
</body>
</html>
